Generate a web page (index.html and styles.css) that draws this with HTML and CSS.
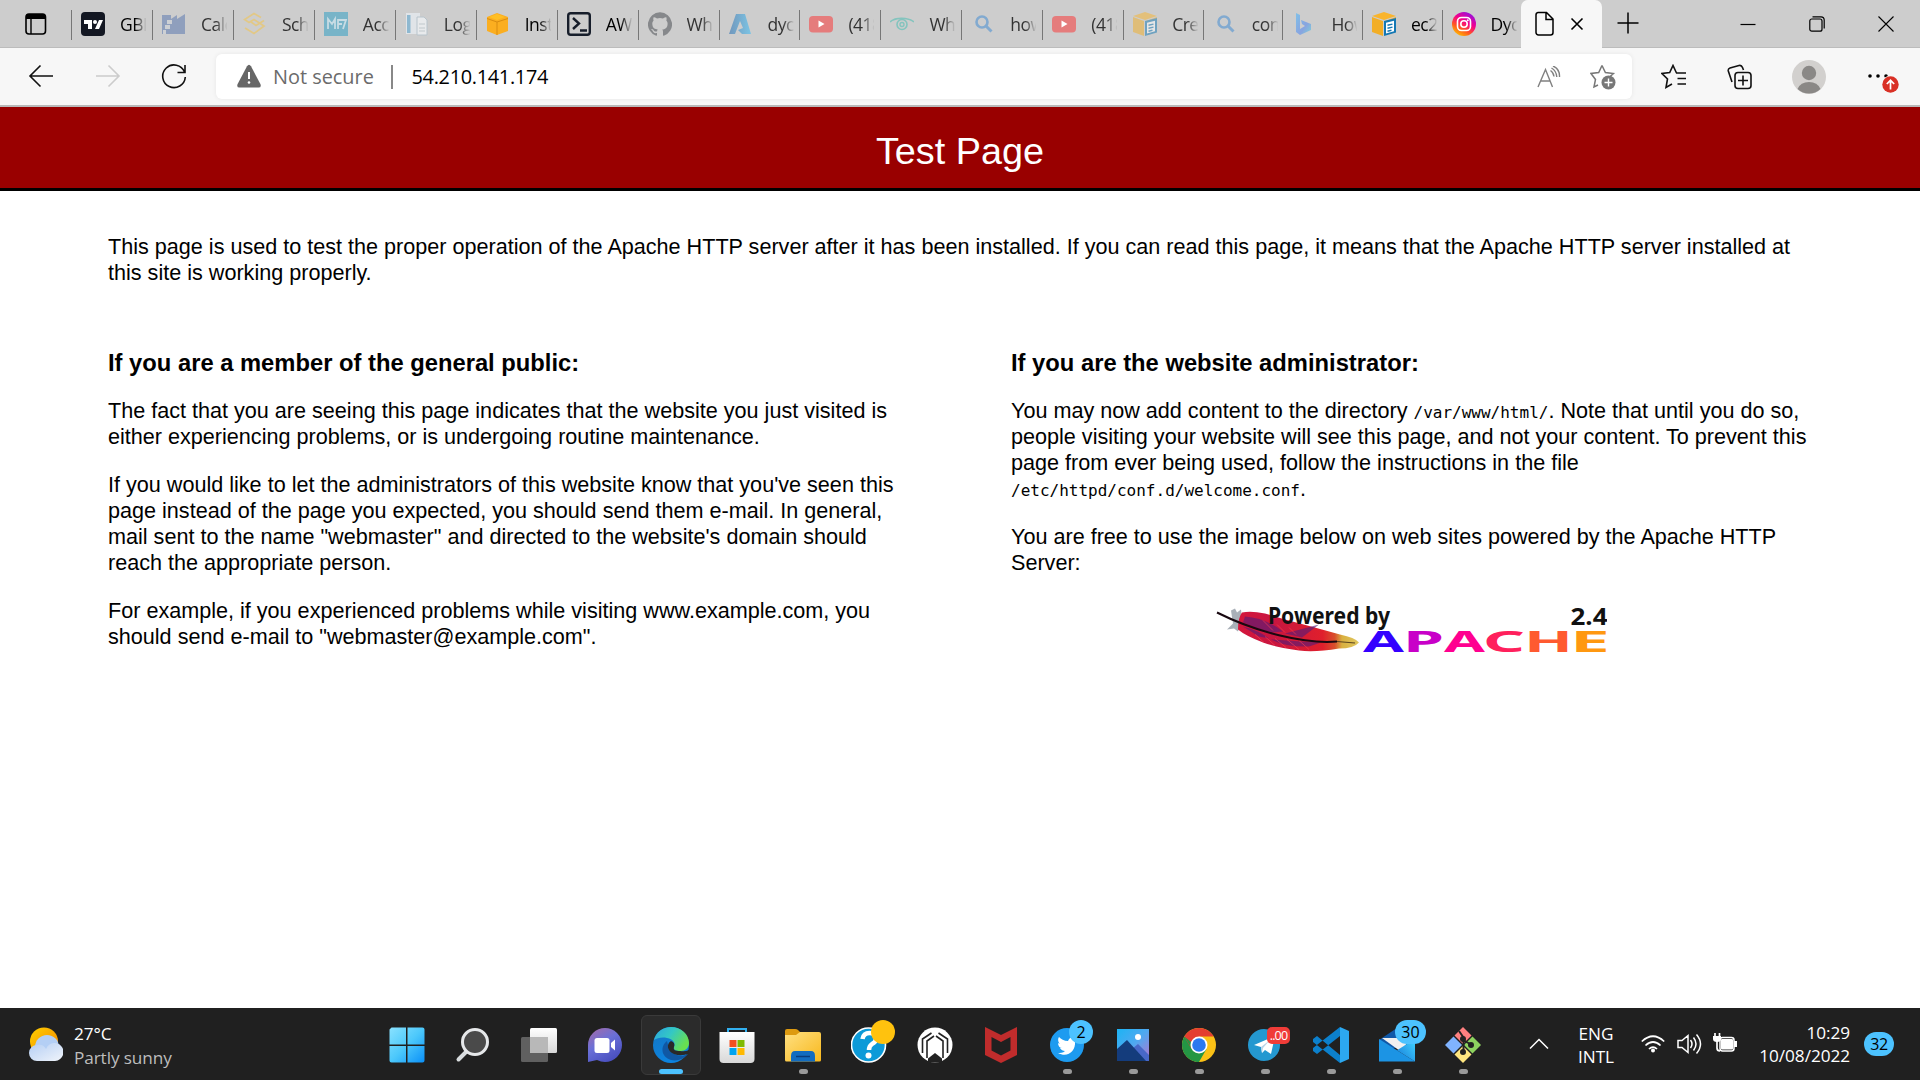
FILE: index.html
```html
<!DOCTYPE html>
<html lang="en">
<head>
<meta charset="utf-8">
<title>Test Page</title>
<link rel="stylesheet" href="styles.css">
</head>
<body>
<svg width="0" height="0" class="defs" aria-hidden="true">
  <defs>
    <linearGradient id="feather" x1="0" x2="1"><stop offset="0" stop-color="#d4163c"/><stop offset=".3" stop-color="#c81640"/><stop offset=".7" stop-color="#e01f2c"/><stop offset=".8" stop-color="#d8502c"/><stop offset=".86" stop-color="#d9b040"/><stop offset="1" stop-color="#e0c860"/></linearGradient>
    <linearGradient id="insta" x1=".2" y1="1" x2=".8" y2="0"><stop offset="0" stop-color="#ffc800"/><stop offset=".3" stop-color="#ff5a1e"/><stop offset=".6" stop-color="#f5008c"/><stop offset="1" stop-color="#8a14e8"/></linearGradient>
    <linearGradient id="win" x1="0" y1="0" x2="1" y2="1"><stop offset="0" stop-color="#8ae2ff"/><stop offset=".5" stop-color="#4cc8fb"/><stop offset="1" stop-color="#0a90f8"/></linearGradient>
    <linearGradient id="chat" x1="0" y1="0" x2=".6" y2="1"><stop offset="0" stop-color="#a86aa4"/><stop offset=".5" stop-color="#6a70d8"/><stop offset="1" stop-color="#4a50c0"/></linearGradient>
    <linearGradient id="edgeA" x1="0" y1="0" x2="1" y2=".5"><stop offset="0" stop-color="#2ba4e0"/><stop offset=".5" stop-color="#34c8c4"/><stop offset="1" stop-color="#68e050"/></linearGradient>
    <linearGradient id="edgeB" x1="0" y1="0" x2=".4" y2="1"><stop offset="0" stop-color="#1574c0"/><stop offset="1" stop-color="#0c84e0"/></linearGradient>
    <linearGradient id="store" x1="0" y1="0" x2="0" y2="1"><stop offset="0" stop-color="#fff"/><stop offset="1" stop-color="#d8d8d8"/></linearGradient>
    <linearGradient id="folder" x1="0" y1="0" x2="1" y2="1"><stop offset="0" stop-color="#ffe082"/><stop offset="1" stop-color="#f8b81c"/></linearGradient>
    <linearGradient id="sky" x1="0" y1="0" x2="1" y2="1"><stop offset="0" stop-color="#1cb4f4"/><stop offset=".5" stop-color="#50a8f0"/><stop offset="1" stop-color="#b474d0"/></linearGradient>
    <linearGradient id="mail" x1="0" y1="1" x2="1" y2="0"><stop offset="0" stop-color="#1678d8"/><stop offset="1" stop-color="#40d4ff"/></linearGradient>
    <linearGradient id="sun" x1="0" y1="0" x2="1" y2="1"><stop offset="0" stop-color="#ffd000"/><stop offset="1" stop-color="#f48400"/></linearGradient>
    <linearGradient id="cloud" x1="0" y1="0" x2="1" y2="1"><stop offset="0" stop-color="#b4cef4"/><stop offset="1" stop-color="#f0f4fa"/></linearGradient>
    <linearGradient id="azure" x1="0" x2="1"><stop offset="0" stop-color="#7197bc"/><stop offset="1" stop-color="#7cc4e4"/></linearGradient>
    <linearGradient id="bing" x1="0" y1="0" x2="1" y2="1"><stop offset="0" stop-color="#80c0e8"/><stop offset=".6" stop-color="#88a4e0"/><stop offset="1" stop-color="#80d0d8"/></linearGradient>
    <g id="search-icon"><circle cx="11" cy="10" r="5.500" fill="none" stroke="#82aad0" stroke-width="2.600"/><path d="M15 14 20.500 19.500" stroke="#82aad0" stroke-width="3"/></g>
    <g id="tube-icon"><rect y="4" width="24" height="16.500" rx="4" fill="#e57c7c"/><path d="M9.500 8.500v7l6-3.500z" fill="#fff"/></g>
    <g id="box-icon"><path d="M0 4 12 0l12 4-12 4z" fill="#f9b42c"/><path d="M0 5l11 4v15L0 20zM13 9l11-4v4H13z" fill="#f2ae26"/><path d="M12 9l12-3v14.500l-12 3.500z" fill="#1478b4"/><path d="M14 10.800l8-2v10.500l-8 2.200z" fill="#fff"/><path d="M15.500 13.300l5-1.200m-5 4.200l5-1.200m-5 4.200l4-1" stroke="#1478b4" stroke-width="1.400"/></g>
  </defs>
</svg>

<header class="tabstrip">
  <div class="tab-actions"><svg width="22" height="24" viewBox="0 0 22 24"><rect x="1" y="2" width="19.500" height="20" rx="3" fill="none" stroke="#000" stroke-width="1.600"/><path d="M1 7V5a3 3 0 0 1 3-3h13.500a3 3 0 0 1 3 3v2z"/><path d="M6 7v15" stroke="#000" stroke-width="1.400"/></svg></div>
  <div class="tab live"><svg viewBox="0 0 24 24"><rect width="24" height="24" rx="4" fill="#131722"/><path d="M3 8h8v9H7v-5H3zM18 8h4l-4 9h-4z" fill="#fff"/><circle cx="14" cy="10" r="2" fill="#fff"/></svg><span>GBPU</span></div>
  <div class="tab"><svg viewBox="0 0 24 24"><path d="M0 22V3h9v4l6-4v4l8-5v20z" fill="#8f9fbd"/><path d="M5 8h5v4H5zM3 13h5v4H3zM1 18h3v4H1z" fill="#cdd0d4"/></svg><span>Calcu</span></div>
  <div class="tab"><svg viewBox="0 0 24 24"><path d="M18 5.500 11 1.500 1.500 7.500 6 10.500 11 7.500l10 6.500-10 7.500-9-5.500M21 8.500l-8 5-5.500-4" fill="none" stroke="#e2c886" stroke-width="1.800"/></svg><span>Schem</span></div>
  <div class="tab"><svg viewBox="0 0 24 24"><rect width="24" height="24" fill="#78b4c8"/><path d="M4 17V7l4 5 3-5v10M14 17V8h5m-5 4h4m1-4 3 0-3 9" fill="none" stroke="#c8dce4" stroke-width="1.800"/></svg><span>Acco</span></div>
  <div class="tab"><svg viewBox="0 0 24 24"><path d="M1 1h14v21H1z" fill="#e0e4e8"/><path d="M2 3h3.500v18H2z" fill="#8eb8d0"/><path d="M12 5h7l3 3v15H12z" fill="#e8eaec" stroke="#b8c4cc"/><path d="M14 12h6m-6 4h6m-6 3h6" stroke="#c0c8cc"/></svg><span>Login</span></div>
  <div class="tab live"><svg viewBox="0 0 24 24"><path d="M1 5 11 1l11 4v14l-11 4L1 19z" fill="#fbae20"/><path d="M1 6.500 11 10l11-3.500M11 10v13" stroke="#d98c10" fill="none"/><path d="M3 5 11 2l8 3-8 3z" fill="#ffbf24"/></svg><span>Insta</span></div>
  <div class="tab live"><svg viewBox="0 0 24 24"><rect x="1.200" y="1.200" width="21.600" height="21.600" rx="2.500" fill="none" stroke="#171e2b" stroke-width="2.400"/><path d="M6 6l6 5.500L6 17M13 18.500h7" fill="none" stroke="#171e2b" stroke-width="2.400"/></svg><span>AWS</span></div>
  <div class="tab"><svg viewBox="0 0 24 24"><path fill="#86888b" d="M12 .3a12 12 0 0 0-3.800 23.400c.6.100.8-.3.800-.6v-2c-3.300.7-4-1.600-4-1.600-.6-1.400-1.400-1.800-1.400-1.800-1-.7.100-.7.100-.7 1.200 0 1.900 1.200 1.900 1.200 1 1.800 2.800 1.300 3.500 1 0-.8.400-1.300.7-1.600-2.700-.3-5.500-1.300-5.500-6 0-1.200.5-2.300 1.300-3.100-.2-.4-.6-1.600 0-3.200 0 0 1-.3 3.400 1.200a11.500 11.500 0 0 1 6 0c2.300-1.500 3.300-1.200 3.300-1.200.6 1.600.2 2.800 0 3.200.9.800 1.300 1.900 1.300 3.200 0 4.600-2.800 5.600-5.500 5.900.5.400.9 1 .9 2.200v3.300c0 .3.100.7.800.6A12 12 0 0 0 12 .3"/></svg><span>What</span></div>
  <div class="tab"><svg viewBox="0 0 24 24"><path d="M7 2h9l6 20h-9L9 18l5-2-3-7-5 13H0z" fill="url(#azure)"/></svg><span>dyco</span></div>
  <div class="tab"><svg viewBox="0 0 24 24"><use href="#tube-icon"/></svg><span>(418)</span></div>
  <div class="tab"><svg viewBox="0 0 24 24"><path d="M0 10c5-5 18-5 24 0M3 8c5-2 13-2 18 0" fill="none" stroke="#84c4be" stroke-width="1.500"/><circle cx="12" cy="12.500" r="5" fill="none" stroke="#84c4be" stroke-width="1.600"/><circle cx="12" cy="12.500" r="2" fill="none" stroke="#84c4be" stroke-width="1.400"/></svg><span>What</span></div>
  <div class="tab"><svg viewBox="0 0 24 24"><use href="#search-icon"/></svg><span>how</span></div>
  <div class="tab"><svg viewBox="0 0 24 24"><use href="#tube-icon"/></svg><span>(418)</span></div>
  <div class="tab narrow"><svg viewBox="0 0 24 24" class="faded"><use href="#box-icon"/></svg><span>Crea</span></div>
  <div class="tab narrow"><svg viewBox="0 0 24 24"><use href="#search-icon"/></svg><span>conn</span></div>
  <div class="tab narrow"><svg viewBox="0 0 24 24"><path d="M4 1l4 2v14l5-3-3-2-1-4 10 4v6L8 23l-4-3z" fill="url(#bing)"/></svg><span>How</span></div>
  <div class="tab narrow live"><svg viewBox="0 0 24 24"><use href="#box-icon"/></svg><span>ec2-</span></div>
  <div class="tab narrow live"><svg viewBox="0 0 24 24"><circle cx="12" cy="12" r="12" fill="url(#insta)"/><rect x="5.500" y="5.500" width="13" height="13" rx="4" fill="none" stroke="#fff" stroke-width="1.600"/><circle cx="12" cy="12" r="3.200" fill="none" stroke="#fff" stroke-width="1.600"/><circle cx="15.800" cy="8.200" r="1" fill="#fff"/></svg><span>Dyco</span></div>
  <div class="tab-active">
    <svg width="20" height="26" viewBox="0 0 20 26"><path d="M3 1.500h8.500L18 8v13.500a2.500 2.500 0 0 1-2.500 2.500h-12A2.500 2.500 0 0 1 1 21.500V4a2.500 2.500 0 0 1 2-2.500zM11 1.500V8.500h7" fill="none" stroke="#000" stroke-width="1.500"/></svg>
    <svg width="14" height="14" viewBox="0 0 14 14"><path d="M1.500 1.500l11 11m0-11l-11 11" stroke="#000" stroke-width="1.600"/></svg>
  </div>
  <svg class="new-tab" width="22" height="22" viewBox="0 0 22 22"><path d="M11 .5v21M.5 11h21" stroke="#000" stroke-width="1.500"/></svg>
  <div class="window-buttons">
    <svg width="16" height="16" viewBox="0 0 16 16"><path d="M.5 8.500h15" stroke="#000" stroke-width="1.200"/></svg>
    <svg width="16" height="16" viewBox="0 0 16 16"><rect x=".8" y="3" width="12.200" height="12.200" rx="2" fill="none" stroke="#000" stroke-width="1.200"/><path d="M3.500.8h8.500a3.200 3.200 0 0 1 3.200 3.200v8.500" fill="none" stroke="#000" stroke-width="1.200"/></svg>
    <svg width="16" height="16" viewBox="0 0 16 16"><path d="M.5.5l15 15m0-15l-15 15" stroke="#000" stroke-width="1.100"/></svg>
  </div>
</header>

<nav class="toolbar">
  <svg class="back" width="26" height="24" viewBox="0 0 26 24"><path d="M25 12H2M12.500 1.500L2 12l10.500 10.500" fill="none" stroke="#111" stroke-width="1.600"/></svg>
  <svg class="forward" width="26" height="24" viewBox="0 0 26 24"><path d="M1 12h23M13.500 1.500L24 12 13.500 22.500" fill="none" stroke="#ccc" stroke-width="1.600"/></svg>
  <svg class="reload" width="26" height="26" viewBox="0 0 26 26"><path d="M23.500 8A11.300 11.300 0 1 0 24.300 13M24 1v7.500h-7.500" fill="none" stroke="#111" stroke-width="1.600"/></svg>
  <div class="address">
    <svg class="warn" width="24" height="24" viewBox="0 0 24 24"><path d="M10 2.200q2-3 4 0l9.500 18q1 3.300-2 3.300h-19q-3 0-2-3.300z" fill="#666"/><path d="M12 8v7" stroke="#fff" stroke-width="2"/><circle cx="12" cy="18.500" r="1.300" fill="#fff"/></svg>
    <span class="insecure">Not secure</span>
    <span class="divider"></span>
    <span class="url">54.210.141.174</span>
    <svg class="read" width="24" height="22" viewBox="0 0 24 22"><path d="M1 21 8.500 3.500 15.500 21M3.500 15h10M13.500 4.500q3 2 3.500 6M14.500 2q5 3 5.300 9M16 0q7 3 6.500 11" fill="none" stroke="#808080" stroke-width="1.400"/></svg>
    <svg class="fav" width="26" height="26" viewBox="0 0 26 26"><path d="M12 1.500l3.400 7 8 1-6 5.500M8 21l-4 2 1.500-7.500L1 9.500l7.700-1L12 1.500" fill="none" stroke="#777" stroke-width="1.500"/><circle cx="18.500" cy="18.500" r="7" fill="#777"/><path d="M18.500 14.500v8m-4-4h8" stroke="#fff" stroke-width="1.400"/></svg>
  </div>
  <svg class="favorites" width="26" height="26" viewBox="0 0 26 26"><path d="M15.500 9L12 1.500 8.700 8.500 1 9.500l5.500 5.500L5 23.500l6-3.500M15 9h10M16.500 14.500H25M16.500 20H25" fill="none" stroke="#111" stroke-width="1.600"/></svg>
  <svg class="collections" width="26" height="26" viewBox="0 0 26 26"><path d="M5 18L1.300 7Q.8 4.800 3 4l9-2.500q2.500-.6 3.500 2L16.500 6" fill="none" stroke="#111" stroke-width="1.600"/><rect x="8" y="8.500" width="16" height="16" rx="3" fill="none" stroke="#111" stroke-width="1.600"/><path d="M16 11.500v10m-5-5h10" stroke="#111" stroke-width="1.600"/></svg>
  <svg class="profile" width="34" height="34" viewBox="0 0 34 34"><circle cx="17" cy="17" r="17" fill="#d2d0ce"/><circle cx="17" cy="13" r="7.200" fill="#8a8886"/><path d="M5.500 29q3-7 11.500-7t11.500 7q-5 4.500-11.500 4.500T5.500 29z" fill="#8a8886"/></svg>
  <svg class="menu" width="32" height="30" viewBox="0 0 32 30"><circle cx="3" cy="12" r="1.800"/><circle cx="11" cy="12" r="1.800"/><circle cx="19" cy="12" r="1.800"/><circle cx="23.500" cy="20.500" r="9" fill="#f7f7f7"/><circle cx="23.500" cy="20.500" r="8.200" fill="#d93025"/><path d="M23.500 25.500v-9M19.800 20l3.700-3.700 3.700 3.700" fill="none" stroke="#fff" stroke-width="1.700"/></svg>
</nav>

<main class="page">
  <h1>Test Page</h1>
  <div class="content">
    <p class="intro">This page is used to test the proper operation of the Apache HTTP server after it has been installed. If you can read this page, it means that the Apache HTTP server installed at<br>this site is working properly.</p>
    <div class="columns">
      <section>
        <h2>If you are a member of the general public:</h2>
        <p>The fact that you are seeing this page indicates that the website you just visited is<br>either experiencing problems, or is undergoing routine maintenance.</p>
        <p>If you would like to let the administrators of this website know that you've seen this<br>page instead of the page you expected, you should send them e-mail. In general,<br>mail sent to the name "webmaster" and directed to the website's domain should<br>reach the appropriate person.</p>
        <p>For example, if you experienced problems while visiting www.example.com, you<br>should send e-mail to "webmaster@example.com".</p>
      </section>
      <section>
        <h2>If you are the website administrator:</h2>
        <p>You may now add content to the directory <code>/var/www/html/</code>. Note that until you do so,<br>people visiting your website will see this page, and not your content. To prevent this<br>page from ever being used, follow the instructions in the file<br><code>/etc/httpd/conf.d/welcome.conf</code>.</p>
        <p>You are free to use the image below on web sites powered by the Apache HTTP<br>Server:</p>
        <svg class="logo" width="392" height="52" viewBox="0 0 392 52">
          <g transform="translate(0 1.500)">
            <path d="M16 4l4-2 2 4 4-3 1 9-2 7-2 6-4-3-7 1 6-6z" fill="#a9b0b8"/>
            <path d="M27 6Q36 4 50 7L70 13Q100 21 125 28Q140 31 144 36Q139 42 124 42Q100 46 84 44Q62 41 48 36Q30 29 23 23Q23 11 27 6z" fill="url(#feather)"/>
            <path d="M30 10q22 2 38 15l-12 1q-14-4-28-10zM70 27l34-9-17 13zM58 33q25 2 48 3l-12 4q-22 1-38-7zM28 20q16 4 26 12l-10-2z" fill="#5a1c74" opacity=".65"/>
            <path d="M40 28l9 8m1-6l10 9m0-7l11 9m1-8l12 10m0-9l10 9m-46-29l10 10m4-6l8 8m4-5l7 7" stroke="#ff4050" stroke-width="1" opacity=".6"/>
            <path d="M2 6Q32 21 65 29T122 35" fill="none" stroke="#180810" stroke-width="2"/>
            <path d="M122 35l18 1.500" stroke="#5a4420" stroke-width="1.200"/>
          </g>
          <g class="logo-small"><text x="53" y="19" textLength="122" lengthAdjust="spacingAndGlyphs">Powered by</text><text x="355.500" y="19.500" textLength="37" lengthAdjust="spacingAndGlyphs">2.4</text></g>
          <g class="logo-word">
            <text x="148" y="47" textLength="41" lengthAdjust="spacingAndGlyphs" fill="#3300ff">A</text>
            <text x="188" y="47" textLength="41" lengthAdjust="spacingAndGlyphs" fill="#c800c8">P</text>
            <text x="229" y="47" textLength="41" lengthAdjust="spacingAndGlyphs" fill="#ff0090">A</text>
            <text x="268" y="47" textLength="42" lengthAdjust="spacingAndGlyphs" fill="#ff205c">C</text>
            <text x="309" y="47" textLength="49" lengthAdjust="spacingAndGlyphs" fill="#ff5a30">H</text>
            <text x="355" y="47" textLength="40" lengthAdjust="spacingAndGlyphs" fill="#ff9810">E</text>
          </g>
        </svg>
      </section>
    </div>
  </div>
</main>

<footer class="taskbar">
  <div class="weather">
    <svg width="34" height="34" viewBox="0 0 34 34"><circle cx="15" cy="14.500" r="14" fill="url(#sun)"/><circle cx="18" cy="20" r="12" fill="#b4cff5"/><path d="M8 18a8 8 0 0 1 9 4 9 9 0 1 1 8 12H8a8 8 0 0 1 0-16z" fill="url(#cloud)"/></svg>
    <div><div>27°C</div><div class="dim">Partly sunny</div></div>
  </div>
  <div class="apps">
    <div class="app"><svg viewBox="0 0 36 36"><path d="M2.500.5H17v17H.5v-15zM18.500.5h15a2 2 0 0 1 2 2v15h-17zM.5 19H17v16.500H2.500a2 2 0 0 1-2-2zM18.500 19h17v14.500a2 2 0 0 1-2 2h-15z" fill="url(#win)"/></svg></div>
    <div class="app"><svg viewBox="0 0 36 36"><path d="M12 24L3.500 32.500" stroke="#d8dcde" stroke-width="4" stroke-linecap="round"/><circle cx="20" cy="15" r="12.500" fill="#4a4a4a" stroke="#e6e8ea" stroke-width="3"/></svg></div>
    <div class="app"><svg viewBox="0 0 36 36"><rect x="0" y="10" width="27" height="25" rx="1.500" fill="#606060"/><rect x="9" y="1" width="27" height="25" rx="1.500" fill="url(#store)"/><rect x="9" y="10" width="18" height="16" fill="#b8b8b8"/></svg></div>
    <div class="app"><svg viewBox="0 0 36 36"><path d="M1 35V18A17 17 0 1 1 18 35q-4 0-8-2z" fill="url(#chat)"/><rect x="7.500" y="11" width="15" height="15" rx="2.500" fill="#fff"/><path d="M24 16l4-3.500v11L24 20z" fill="#fff"/></svg></div>
    <div class="app selected"><svg viewBox="0 0 36 36"><circle cx="18" cy="18" r="18" fill="url(#edgeB)"/><path d="M1 13C3 5 10 0 18 0c10 0 18 7 18 16 0 5-4 8-8 8-5 0-8-1-7-4 2-4-1-8-7-9-5-1-10 0-13 2z" fill="url(#edgeA)"/><path d="M14 14c-7 5-6 16 4 19 8 2 15-3 17-6-6 3-12 2-16-2-3-3-4-7-5-11z" fill="#1058a4"/><path d="M18 14c-5 3-4 10 3 13q8 3 15-1v-3q-4 2-9 1c-5 0-7-1-6-4 1-3 0-5-3-6z" fill="#292929"/></svg><i class="running"></i></div>
    <div class="app"><svg viewBox="0 0 36 36"><path d="M9 6V2h18v4" fill="none" stroke="#32b0f0" stroke-width="2"/><path d="M.5 5h35v27a4 4 0 0 1-4 4h-27a4 4 0 0 1-4-4z" fill="url(#store)"/><path d="M10.500 13h7v7h-7z" fill="#f25022"/><path d="M18.500 13h7v7h-7z" fill="#7fba00"/><path d="M10.500 21h7v7h-7z" fill="#00a4ef"/><path d="M18.500 21h7v7h-7z" fill="#ffb900"/></svg></div>
    <div class="app"><svg viewBox="0 0 36 36"><path d="M0 10V4q0-2 2-2h8q2 0 3 1l3 3v6z" fill="#dd9a10"/><path d="M0 8h11l4-3h19q2 0 2 2v26q0 1.500-1.500 1.500h-33Q0 34.500 0 33z" fill="url(#folder)"/><path d="M6 34.500V29q0-5 4-5h16q4 0 4 5v5.500z" fill="#126cc0"/><path d="M11 29.500h14" stroke="#0a3c7c" stroke-width="1.500"/></svg><i class="running"></i></div>
    <div class="app"><svg viewBox="0 0 36 36"><circle cx="17.500" cy="18" r="17" fill="#0c9ad8" stroke="#fff" stroke-width="1.600"/><path d="M11.500 12q1-6 7-6 6.500 0 6.500 5.500 0 3.500-4 5.500-3 2-3 6" fill="none" stroke="#fff" stroke-width="4.500"/><circle cx="17.500" cy="28.500" r="3" fill="#fff"/></svg><b class="dot"></b></div>
    <div class="app"><svg viewBox="0 0 36 36"><circle cx="18" cy="18" r="17.500" fill="#fff"/><path d="M5.500 26V12l9-6M10 31V14l7-5M30.500 26V12l-9-6M26 31V14l-7-5" fill="none" stroke="#222" stroke-width="1.600"/><path d="M10 31l8-5 8 5" fill="none" stroke="#222" stroke-width="0"/><path d="M11 35.500V31.500l7-5.500 7 5.500v4z" fill="#222"/></svg></div>
    <div class="app"><svg viewBox="0 0 36 36"><path d="M2 0l16 8 16-8v28l-16 8-16-8zM8.500 10v13.500l9.500 5 9.500-5V10L18 15z" fill="#c02c2c" fill-rule="evenodd"/></svg></div>
    <div class="app"><svg viewBox="0 0 36 36"><circle cx="18" cy="18" r="17" fill="#1d9bf0"/><path d="M27 12c-1-2-6-3-8 2-4 0-7-2-9-4-2 3 0 6 1 7l-2-1c0 3 2 5 4 5h-2c1 2 3 3 5 3-2 2-5 2-7 2 9 5 18-1 17-12z" fill="#fff"/></svg><b class="badge">2</b><i class="running"></i></div>
    <div class="app"><svg viewBox="0 0 36 36"><path d="M2 2h32v32H2z" fill="url(#sky)"/><path d="M17 22l6-5 11 11v6H20z" fill="#4868c8"/><path d="M2 22l10-9 19 21H2z" fill="#143c7c"/><circle cx="23" cy="10" r="3" fill="#fff"/></svg><i class="running"></i></div>
    <div class="app"><svg viewBox="0 0 36 36"><circle cx="18" cy="18" r="17" fill="#fbc116"/><path d="M18 18L3.300 9.500A17 17 0 0 0 18 35l7.500-13z" fill="#249644"/><path d="M3.300 9.500a17 17 0 0 1 29.400 0H18L10.500 22z" fill="#e43e30"/><path d="M3.300 9.500L11 22h8z" fill="#249644"/><circle cx="18" cy="18" r="8.500" fill="#fff"/><circle cx="18" cy="18" r="6.800" fill="#2a78f0"/></svg><i class="running"></i></div>
    <div class="app"><svg viewBox="0 0 36 36"><circle cx="17" cy="18" r="16" fill="#2498d0"/><path d="M7 18l21-9-4 18-6-4-3 3-1-6z" fill="#fff"/><path d="M14 20l9-7-7 8-1 5z" fill="#b8d4e8"/></svg><b class="tag">..00</b><i class="running"></i></div>
    <div class="app"><svg viewBox="0 0 36 36"><path d="M0 12l4-3 23 19v8L0 15zM0 24l4 3L27 9V0L0 21z" fill="#0c80cc"/><path d="M27 0l9 4v28l-9 4z" fill="#2ca8f0"/></svg><i class="running"></i></div>
    <div class="app"><svg viewBox="0 0 36 36"><path d="M0 13L18 1l18 12v8H0z" fill="#1058a8"/><path d="M3 11h30l-12 13z" fill="#f0f0f0"/><path d="M0 12l36 22.500H0z" fill="#1c94e4"/><path d="M36 12v22.500L18 23.200z" fill="url(#mail)"/></svg><b class="badge wide">30</b><i class="running"></i></div>
    <div class="app"><svg viewBox="0 0 36 36"><path d="M18 0l8.500 8.500L18 17 9.500 8.500z" fill="#ff8080"/><path d="M8.500 9.500L17 18l-8.500 8.500L0 18z" fill="#80b3ff"/><path d="M27.500 9.500L36 18l-8.500 8.500L19 18z" fill="#8dd35f"/><path d="M18 19l8.500 8.500L18 36l-8.500-8.500z" fill="#ffe680"/><path d="M14 4l4.500 6.500V26M18 13l9 5" fill="none" stroke="#222" stroke-width="2"/><circle cx="18" cy="12" r="3" fill="#222"/><circle cx="18" cy="25" r="3" fill="#222"/><circle cx="26" cy="18" r="3" fill="#222"/></svg><i class="running"></i></div>
  </div>
  <div class="tray">
    <svg class="chevron" width="20" height="12" viewBox="0 0 20 12"><path d="M1 10.500l9-9 9 9" fill="none" stroke="#fff" stroke-width="1.500"/></svg>
    <div class="lang">ENG<br>INTL</div>
    <svg class="wifi" width="24" height="18" viewBox="0 0 24 18"><path d="M.8 6.500Q12-4 23.200 6.500M4.500 10.500q7.500-7 15 0M8 14q4-4 8 0" fill="none" stroke="#fff" stroke-width="1.700"/><circle cx="12" cy="15.500" r="2" fill="#fff"/></svg>
    <svg class="sound" width="25" height="22" viewBox="0 0 25 22"><path d="M1 7.500h4l6-5v17l-6-5H1zM13.500 7q3 4 0 8M16.500 4.500q5 6.500 0 13M19.500 1.500q8 9.500 0 19" fill="none" stroke="#fff" stroke-width="1.500"/></svg>
    <svg class="battery" width="25" height="20" viewBox="0 0 25 20"><path d="M2 0v4M6.500 0v4M4 8v7q0 3 3 3" stroke="#fff" stroke-width="1.700" fill="none"/><path d="M0 3h8v3q0 3-4 3T0 6z" fill="#fff"/><rect x="7" y="4.500" width="14" height="13.500" rx="2.500" fill="none" stroke="#fff" stroke-width="1.500"/><rect x="8" y="6" width="12" height="10.500" rx="1" fill="#fff"/><path d="M21 8h3v6h-3z" fill="#fff"/></svg>
    <div class="clock">10:29<br>10/08/2022</div>
    <div class="count">32</div>
  </div>
</footer>
</body>
</html>
```
FILE: styles.css
```css
* { box-sizing: border-box; }
body {
  margin: 0;
  width: 1920px;
  height: 1080px;
  overflow: hidden;
  display: flex;
  flex-direction: column;
  background: #fff;
  font-family: "Open Sans", "Noto Sans", sans-serif;
}
svg { display: block; flex: none; }
.defs { position: absolute; }

/* tab strip */
.tabstrip {
  height: 48px;
  display: flex;
  align-items: flex-start;
  background: #cdcdcd;
  box-shadow: inset 0 -1px 0 #bcbcbc;
}
.tab-actions { width: 71px; padding: 12px 0 0 25px; }
.tab {
  width: 80.950px;
  height: 30px;
  margin-top: 10px;
  padding-left: 9px;
  display: flex;
  align-items: center;
  border-left: 1px solid #777;
  color: #333;
}
.tab.narrow { width: 79.600px; }
.tab.live { color: #000; }
.tab svg { width: 24px; height: 24px; margin-top: -2px; }
.tab .faded { opacity: .5; }
.tab span {
  margin: -2px 0 0 15px;
  width: 27px;
  overflow: hidden;
  white-space: nowrap;
  font-size: 17.500px;
  line-height: 26px;
  letter-spacing: -.5px;
  font-weight: 400;
  -webkit-mask-image: linear-gradient(90deg, #000 55%, transparent 98%);
  mask-image: linear-gradient(90deg, #000 55%, transparent 98%);
}
.tab-active {
  width: 81px;
  height: 48px;
  padding: 0 18px 0 14px;
  display: flex;
  align-items: center;
  justify-content: space-between;
  background: #f7f7f7;
  border-radius: 7px 7px 0 0;
}
.new-tab { margin: 12px 0 0 15px; }
.window-buttons { margin: 16px 26px 0 auto; display: flex; gap: 53px; }

/* toolbar */
.toolbar {
  height: 59px;
  display: flex;
  align-items: center;
  padding: 0 20px 0 28px;
  background: #f7f7f7;
  border-bottom: 2px solid #b9b9b9;
}
.back, .forward { margin-top: -1px; }
.forward { margin-left: 41px; }
.reload { margin-left: 40px; }
.address {
  width: 1416px;
  height: 45px;
  margin-left: 29px;
  padding: 0 16px 0 21px;
  display: flex;
  align-items: center;
  background: #fff;
  border-radius: 6px;
  box-shadow: 0 0 5px rgba(0, 0, 0, .07);
  font-size: 19.900px;
}
.warn { margin-top: -1px; }
.insecure { width: 101px; margin-left: 12px; color: #6b6b6b; white-space: nowrap; }
.divider { width: 1.500px; height: 24px; margin: 0 19px 0 17px; background: #888; }
.url { color: #000; letter-spacing: -.3px; }
.read { margin-left: auto; }
.fav { margin-left: 29px; }
.favorites { margin-left: 29px; }
.collections { margin-left: 40px; }
.profile { margin-left: 39px; }
.menu { margin: 4px 0 0 41px; }

/* web page */
.page {
  flex: 1;
  overflow: hidden;
  font-family: "Liberation Sans", Arial, sans-serif;
  font-size: 21.600px;
  line-height: 26px;
  color: #000;
}
h1 {
  margin: 0;
  height: 84px;
  padding-top: 4px;
  border-bottom: 3px solid #000;
  background: #900;
  color: #fff;
  font-size: 37.800px;
  font-weight: 400;
  line-height: 80px;
  text-align: center;
}
.content { padding: 43px 108px 0; white-space: nowrap; }
.content p { margin: 0 0 22px; }
.content .intro { margin-bottom: 63px; }
.columns { display: grid; grid-template-columns: 801px 801px; gap: 102px; }
h2 { margin: 0 0 22px; font-size: 23.750px; line-height: 27px; }
code { font-family: "DejaVu Sans Mono", monospace; font-size: 16px; line-height: 20px; }
.logo { margin: 29px 0 0 204px; }
.logo text { font-family: "Noto Sans", sans-serif; }
.logo-small { font-size: 22.500px; font-weight: 700; fill: #111; }
.logo-word { font-size: 28.500px; font-weight: 700; }

/* taskbar */
.taskbar {
  height: 72px;
  display: flex;
  background: #202020;
  color: #fff;
  font-size: 17.200px;
}
.weather { width: 374px; padding: 14px 0 0 29px; display: flex; gap: 11px; line-height: 24px; letter-spacing: -.1px; }
.weather svg { margin-top: 5px; }
.dim { color: #bdbdbd; }
.apps { display: flex; }
.app { width: 66px; height: 72px; position: relative; display: flex; flex-direction: column; align-items: center; padding-top: 19px; }
.app svg { width: 36px; height: 36px; }
.app.selected { width: 60px; height: 60px; margin: 7px 3px; padding-top: 12px; background: #2b2b2b; border: 1px solid #3a3a3a; border-radius: 6px; }
.app.selected svg { margin-top: -1px; }
.running { width: 9px; height: 5px; margin-top: 6px; border-radius: 3px; background: #9a9a9a; }
.selected .running { width: 24px; background: #4cc2ff; }
.badge, .dot, .tag { position: absolute; font-weight: 400; text-align: center; }
.badge { left: 35px; top: 12px; width: 24px; height: 24px; border-radius: 12px; background: #4cc2ff; color: #000; font-size: 16px; line-height: 24px; }
.badge.wide { left: 31px; width: 31px; }
.dot { left: 35px; top: 12px; width: 24px; height: 24px; border-radius: 50%; background: #ffc20e; }
.tag { left: 35px; top: 19px; width: 23px; height: 17px; border-radius: 5px; background: #f03c38; font-size: 12.500px; line-height: 17px; letter-spacing: -.8px; }
.tray { flex: 1; display: flex; align-items: flex-start; padding: 0 26px 0 33px; }
.chevron { margin-top: 30px; }
.lang { width: 40px; margin: 14px 0 0 27px; text-align: center; line-height: 23px; }
.wifi { margin: 27px 0 0 25px; }
.sound { margin: 25px 0 0 12px; }
.battery { margin: 25px 0 0 11px; }
.clock { margin: 13px 0 0 auto; text-align: right; line-height: 23px; letter-spacing: -.05px; }
.count { width: 30px; height: 24px; margin: 24px 0 0 14px; border-radius: 12px; background: #4cc2ff; color: #000; font-size: 16px; letter-spacing: -.5px; line-height: 24px; text-align: center; }
```
